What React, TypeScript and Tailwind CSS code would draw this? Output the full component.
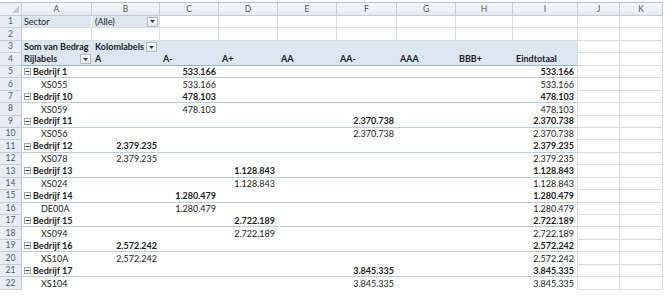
import React from "react";

const LETTERS = ["A", "B", "C", "D", "E", "F", "G", "H", "I", "J", "K"];

type PivotRow = { label: string; bold: boolean; col: number; value: string };

const ROWS: PivotRow[] = [
  { label: "Bedrijf 1", bold: true, col: 3, value: "533.166" },
  { label: "XS055", bold: false, col: 3, value: "533.166" },
  { label: "Bedrijf 10", bold: true, col: 3, value: "478.103" },
  { label: "XS059", bold: false, col: 3, value: "478.103" },
  { label: "Bedrijf 11", bold: true, col: 6, value: "2.370.738" },
  { label: "XS056", bold: false, col: 6, value: "2.370.738" },
  { label: "Bedrijf 12", bold: true, col: 2, value: "2.379.235" },
  { label: "XS078", bold: false, col: 2, value: "2.379.235" },
  { label: "Bedrijf 13", bold: true, col: 4, value: "1.128.843" },
  { label: "XS024", bold: false, col: 4, value: "1.128.843" },
  { label: "Bedrijf 14", bold: true, col: 3, value: "1.280.479" },
  { label: "DE00A", bold: false, col: 3, value: "1.280.479" },
  { label: "Bedrijf 15", bold: true, col: 4, value: "2.722.189" },
  { label: "XS094", bold: false, col: 4, value: "2.722.189" },
  { label: "Bedrijf 16", bold: true, col: 2, value: "2.572.242" },
  { label: "XS10A", bold: false, col: 2, value: "2.572.242" },
  { label: "Bedrijf 17", bold: true, col: 6, value: "3.845.335" },
  { label: "XS104", bold: false, col: 6, value: "3.845.335" },
];

const HEADERS4 = ["A", "A-", "A+", "AA", "AA-", "AAA", "BBB+"];

function DropBtn() {
  return (
    <div className="flex h-[10px] w-[11px] shrink-0 items-center justify-center border border-[#b4b9c0] bg-gradient-to-b from-white to-[#e6e9ee]">
      <svg width="5" height="3" viewBox="0 0 5 3">
        <path d="M0 0H5L2.5 3Z" fill="#3c3c3c" />
      </svg>
    </div>
  );
}

function Minus() {
  return (
    <svg width="7" height="7" viewBox="0 0 7 7" className="mr-[2px] shrink-0">
      <rect x="0.5" y="0.5" width="6" height="6" fill="#ffffff" stroke="#9ca6b2" />
      <line x1="1.5" y1="3.5" x2="5.5" y2="3.5" stroke="#2a2a2a" />
    </svg>
  );
}

function RowHdr({ n }: { n: number }) {
  return (
    <div className="flex items-center justify-center border-r border-b border-[#c6ccd5] bg-[#e9edf3] text-[8.5px] text-[#4a5a70]">
      {n}
    </div>
  );
}

function Grid({ children, className = "" }: { children?: React.ReactNode; className?: string }) {
  return (
    <div className={"flex items-center overflow-hidden whitespace-nowrap border-r border-b border-[#dadcdd] px-[3px] " + className}>
      {children}
    </div>
  );
}

export default function App() {
  return (
    <div className="h-[296px] w-[669px] bg-white pt-[2px] text-[9px] text-[#1c1c1c] [font-family:Lato,'Liberation_Sans',sans-serif]">
      <div className="grid w-[663px] grid-cols-[22px_70px_68px_59px_59px_59px_60px_59px_57px_65px_42px_43px] grid-rows-[13px_repeat(22,12.45px)] border-t border-[#b9c1cc]">
        {/* column header row */}
        <div className="relative border-r border-b border-[#c6ccd5] bg-[#eef1f5]">
          <div className="absolute right-[2px] bottom-[2px] h-0 w-0 border-b-[7px] border-l-[7px] border-b-[#c3c8cf] border-l-transparent" />
        </div>
        {LETTERS.map((l) => (
          <div
            key={l}
            className="flex items-center justify-center border-r border-b border-[#c6ccd5] bg-gradient-to-b from-[#f6f8fa] to-[#e7ebf0] text-[8.5px] text-[#4a5463]"
          >
            {l}
          </div>
        ))}

        {/* row 1 */}
        <RowHdr n={1} />
        <div className="flex items-center border-r border-b border-r-white border-b-[#dadcdd] bg-[#dce6f1] px-[2px]">Sector</div>
        <div className="flex items-center justify-between border-r border-b border-[#dadcdd] bg-[#dce6f1] pl-[3px] pr-[1px]">
          <span>(Alle)</span>
          <DropBtn />
        </div>
        {[3, 4, 5, 6, 7, 8, 9, 10, 11].map((c) => (
          <Grid key={"r1" + c} />
        ))}

        {/* row 2 */}
        <RowHdr n={2} />
        {[1, 2, 3, 4, 5, 6, 7, 8, 9, 10, 11].map((c) => (
          <Grid key={"r2" + c} />
        ))}

        {/* row 3 */}
        <RowHdr n={3} />
        <div className="flex items-center whitespace-nowrap bg-[#dce6f1] px-[2px] font-bold">Som van Bedrag</div>
        <div className="flex items-center gap-[2px] whitespace-nowrap bg-[#dce6f1] pl-[3px] font-bold">
          <span>Kolomlabels</span>
          <DropBtn />
        </div>
        <div className="col-span-7 border-r border-[#dadcdd] bg-[#dce6f1]" />
        <Grid />
        <Grid />

        {/* row 4 */}
        <RowHdr n={4} />
        <div className="flex items-center justify-between border-b border-[#95b3d7] bg-[#dce6f1] pl-[2px] pr-[1px] font-bold">
          <span>Rijlabels</span>
          <DropBtn />
        </div>
        {HEADERS4.map((h) => (
          <div key={h} className="flex items-center border-b border-[#95b3d7] bg-[#dce6f1] px-[3px] font-bold">
            {h}
          </div>
        ))}
        <div className="flex items-center border-r border-b border-r-[#dadcdd] border-b-[#95b3d7] bg-[#dce6f1] px-[3px] font-bold">
          Eindtotaal
        </div>
        <Grid />
        <Grid />

        {/* pivot rows */}
        {ROWS.map((r, i) => {
          const rowNum = i + 5;
          const line = r.bold ? "border-b border-[#b8cce4]" : "";
          const weight = r.bold ? "font-bold" : "";
          return (
            <React.Fragment key={rowNum}>
              <RowHdr n={rowNum} />
              <div className={"flex items-center whitespace-nowrap " + line + " " + weight + (r.bold ? " pl-[2px]" : " pl-[19px]")}>
                {r.bold && <Minus />}
                <span>{r.label}</span>
              </div>
              {[2, 3, 4, 5, 6, 7, 8].map((c) => (
                <div key={c} className={"flex items-center justify-end pr-[3px] " + line + " " + weight}>
                  {c === r.col ? r.value : ""}
                </div>
              ))}
              <div className={"flex items-center justify-end border-r border-r-[#dadcdd] pr-[3px] " + line + " " + weight}>
                {r.value}
              </div>
              <Grid />
              <Grid />
            </React.Fragment>
          );
        })}
      </div>
    </div>
  );
}
